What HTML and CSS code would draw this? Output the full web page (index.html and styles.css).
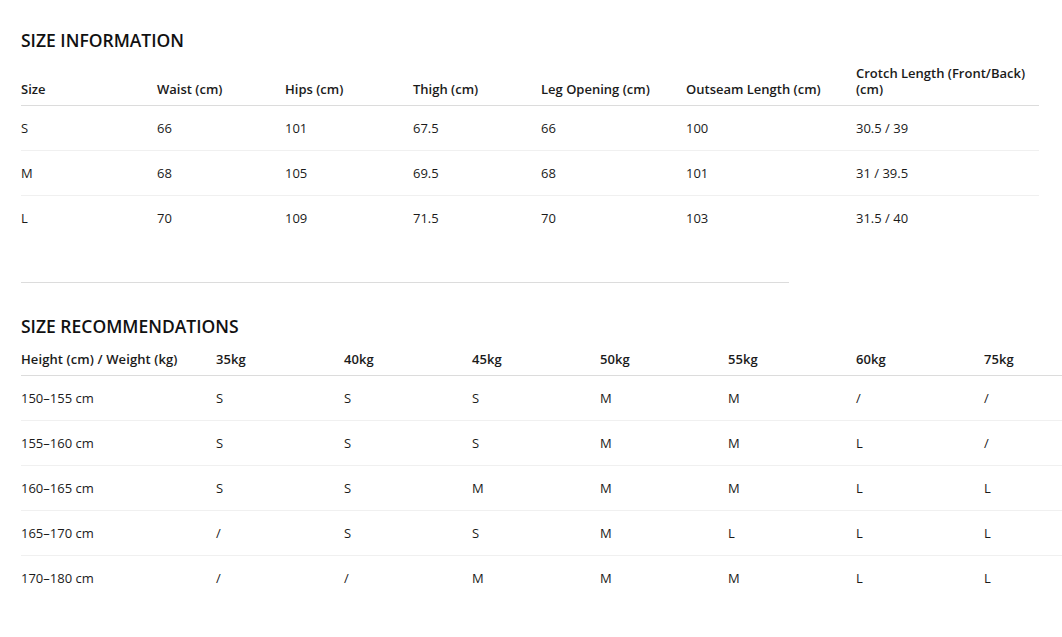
FILE: index.html
```html
<!DOCTYPE html>
<html lang="en">
<head>
<meta charset="utf-8">
<title>Size Guide</title>
<link rel="stylesheet" href="styles.css">
</head>
<body>
<main class="page">
  <section class="size-info">
    <h2 class="section-title">SIZE INFORMATION</h2>
    <table class="size-table info-table">
      <colgroup>
        <col class="c-136"><col class="c-128"><col class="c-128"><col class="c-128"><col class="c-145"><col class="c-170"><col>
      </colgroup>
      <thead>
        <tr>
          <th>Size</th>
          <th>Waist (cm)</th>
          <th>Hips (cm)</th>
          <th>Thigh (cm)</th>
          <th>Leg Opening (cm)</th>
          <th>Outseam Length (cm)</th>
          <th>Crotch Length (Front/Back)<br>(cm)</th>
        </tr>
      </thead>
      <tbody>
        <tr><td>S</td><td>66</td><td>101</td><td>67.5</td><td>66</td><td>100</td><td>30.5 / 39</td></tr>
        <tr><td>M</td><td>68</td><td>105</td><td>69.5</td><td>68</td><td>101</td><td>31 / 39.5</td></tr>
        <tr><td>L</td><td>70</td><td>109</td><td>71.5</td><td>70</td><td>103</td><td>31.5 / 40</td></tr>
      </tbody>
    </table>
  </section>

  <hr class="divider">

  <section class="size-rec">
    <h2 class="section-title">SIZE RECOMMENDATIONS</h2>
    <table class="size-table rec-table">
      <colgroup>
        <col class="c-195"><col class="c-128"><col class="c-128"><col class="c-128"><col class="c-128"><col class="c-128"><col class="c-128"><col class="c-128">
      </colgroup>
      <thead>
        <tr>
          <th>Height (cm) / Weight (kg)</th>
          <th>35kg</th><th>40kg</th><th>45kg</th><th>50kg</th><th>55kg</th><th>60kg</th><th>75kg</th>
        </tr>
      </thead>
      <tbody>
        <tr><td>150–155 cm</td><td>S</td><td>S</td><td>S</td><td>M</td><td>M</td><td>/</td><td>/</td></tr>
        <tr><td>155–160 cm</td><td>S</td><td>S</td><td>S</td><td>M</td><td>M</td><td>L</td><td>/</td></tr>
        <tr><td>160–165 cm</td><td>S</td><td>S</td><td>M</td><td>M</td><td>M</td><td>L</td><td>L</td></tr>
        <tr><td>165–170 cm</td><td>/</td><td>S</td><td>S</td><td>M</td><td>L</td><td>L</td><td>L</td></tr>
        <tr><td>170–180 cm</td><td>/</td><td>/</td><td>M</td><td>M</td><td>M</td><td>L</td><td>L</td></tr>
      </tbody>
    </table>
  </section>
</main>
</body>
</html>
```

FILE: styles.css
```css
html, body {
  margin: 0;
  padding: 0;
  background: #fff;
}

body {
  font-family: "Open Sans", "Noto Sans", "Liberation Sans", sans-serif;
  color: #1b1b1b;
  font-size: 13px;
  overflow: hidden;
}

.page {
  padding: 28px 0 0 21px;
  width: 1018px;
}

.section-title {
  margin: 0 0 13px;
  font-size: 17.5px;
  line-height: 24px;
  font-weight: 600;
  letter-spacing: 0;
  color: #111;
}

.size-table {
  border-collapse: collapse;
  table-layout: fixed;
  text-align: left;
}

.info-table {
  width: 1018px;
}

.rec-table {
  width: 1091px;
}

.c-136 { width: 136px; }
.c-128 { width: 128px; }
.c-145 { width: 145px; }
.c-170 { width: 170px; }
.c-195 { width: 195px; }

.size-table th,
.size-table td {
  padding: 0 12px 0 0;
  line-height: 16px;
  vertical-align: bottom;
}

.size-table th {
  font-weight: 600;
  padding-bottom: 8px;
  border-bottom: 1px solid #dcdcdc;
}

.rec-table th {
  letter-spacing: 0.1px;
}

.size-table td {
  font-weight: 400;
  padding-top: 14px;
  padding-bottom: 14px;
  vertical-align: middle;
  border-bottom: 1px solid #f0f0f0;
}

.size-table tbody tr:last-child td {
  border-bottom: none;
}

.divider {
  width: 768px;
  margin: 42px 0 31px;
  border: none;
  border-top: 1px solid #dcdcdc;
  height: 0;
}
```
